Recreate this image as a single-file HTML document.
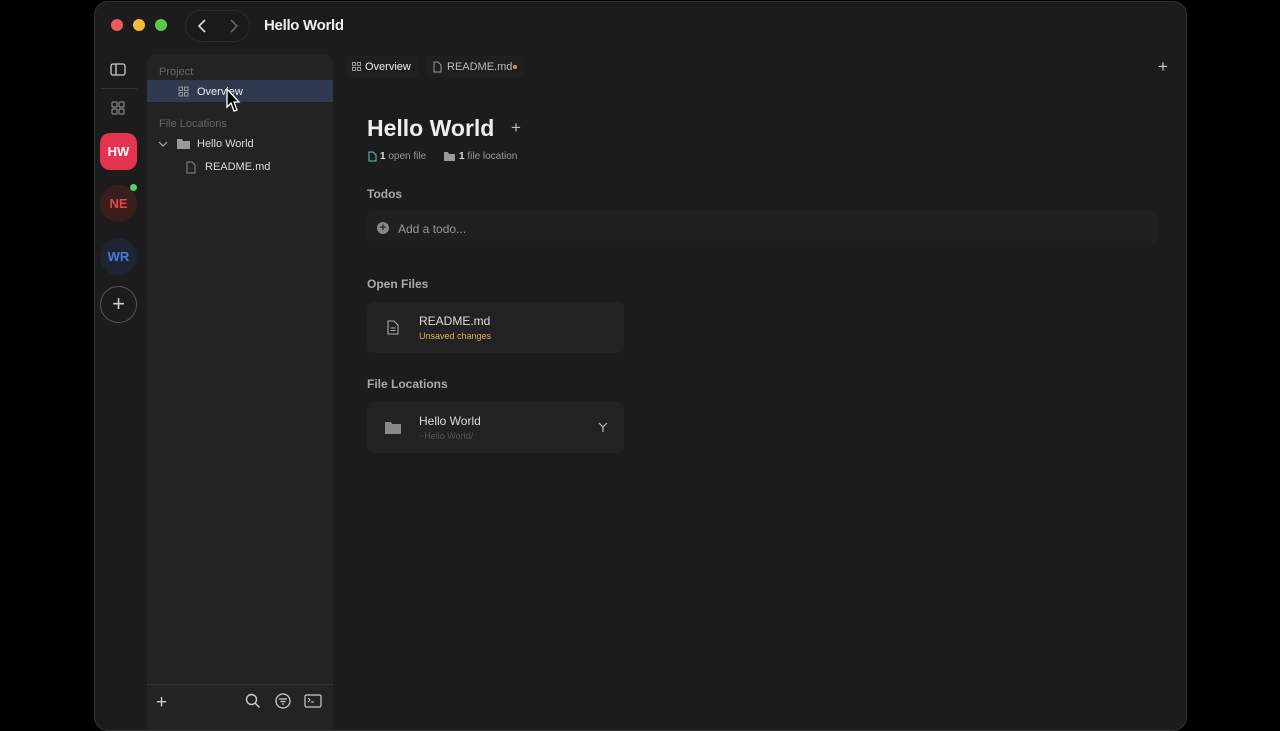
<!DOCTYPE html>
<html><head><style>
*{margin:0;padding:0;box-sizing:border-box}
body{width:1280px;height:720px;background:#000;font-family:"Liberation Sans",sans-serif;overflow:hidden;position:relative}
.win{position:absolute;left:94px;top:1px;width:1093px;height:730px;background:#1c1c1c;border-radius:14px;border:1px solid #333;overflow:hidden}
.a{position:absolute}
.side{left:52px;top:52px;width:186px;height:690px;background:#232323;border-radius:8px 8px 0 0}
.t{color:#ddd;font-size:11px;position:absolute;white-space:nowrap}
.card{position:absolute;background:#222;border-radius:6px}
.av{position:absolute;left:5px;width:37px;height:37px;border-radius:50%;font-weight:bold;font-size:13px;text-align:center;line-height:37px}
</style></head><body>
<div class="win">
 <div class="a" style="left:16px;top:17px;width:12px;height:12px;border-radius:50%;background:#ee5a57"></div>
 <div class="a" style="left:38px;top:17px;width:12px;height:12px;border-radius:50%;background:#f3bd3b"></div>
 <div class="a" style="left:60px;top:17px;width:12px;height:12px;border-radius:50%;background:#5fc64f"></div>
 <div class="a" style="left:90px;top:8px;width:65px;height:32px;border-radius:16px;background:#1a1a1a;border:1px solid #2a2a2a"></div>
 <svg class="a" style="left:100px;top:16px" width="14" height="16"><path d="M10 2 L4 8 L10 14" stroke="#ddd" stroke-width="1.6" fill="none"/></svg>
 <svg class="a" style="left:132px;top:16px" width="14" height="16"><path d="M4 2 L10 8 L4 14" stroke="#666" stroke-width="1.6" fill="none"/></svg>
 <div class="t" style="left:169px;top:15px;font-size:15px;color:#eee;font-weight:bold;letter-spacing:-0.3px">Hello World</div>

 <svg class="a" style="left:15px;top:61px" width="16" height="14"><rect x="1" y="1" width="14" height="11" rx="2" stroke="#ccc" fill="none" stroke-width="1.3"/><line x1="6" y1="1" x2="6" y2="12" stroke="#ccc" stroke-width="1.3"/></svg>
 <div class="a" style="left:6px;top:86px;width:36px;height:1px;background:#333"></div>
 <svg class="a" style="left:16px;top:99px" width="14" height="14"><g stroke="#888" fill="none" stroke-width="1.2"><rect x="1" y="1" width="5" height="5" rx="1"/><rect x="8" y="1" width="5" height="5" rx="1"/><rect x="1" y="8" width="5" height="5" rx="1"/><rect x="8" y="8" width="5" height="5" rx="1"/></g></svg>
 <div class="av" style="top:131px;border-radius:10px;background:#e3334f;color:#fff">HW</div>
 <div class="av" style="top:183px;background:#3a1e1e;color:#e34646">NE</div>
 <div class="a" style="left:35px;top:182px;width:7px;height:7px;border-radius:50%;background:#55d35a"></div>
 <div class="av" style="top:236px;background:#1d2535;color:#4a78e0">WR</div>
 <div class="av" style="top:284px;border:1px solid #555;color:#ccc;font-weight:normal;font-size:22px;line-height:33px">+</div>

 <div class="a side"></div>
 <div class="t" style="left:64px;top:64px;color:#666">Project</div>
 <div class="a" style="left:52px;top:78px;width:186px;height:22px;background:#2f3a50"></div>
 <svg class="a" style="left:83px;top:84px" width="11" height="11"><g stroke="#999" fill="none"><rect x="1" y="1" width="3.5" height="3.5"/><rect x="6.5" y="1" width="3.5" height="3.5"/><rect x="1" y="6.5" width="3.5" height="3.5"/><rect x="6.5" y="6.5" width="3.5" height="3.5"/></g></svg>
 <div class="t" style="left:102px;top:84px;color:#eee">Overview</div>
 <svg class="a" style="left:131px;top:86px" width="16" height="26"><path d="M1 1 L1 19 L5 15 L8 23 L11 22 L8 14 L13 14 Z" fill="#000" stroke="#fff" stroke-width="1.3"/></svg>
 <div class="t" style="left:64px;top:116px;color:#666">File Locations</div>
 <svg class="a" style="left:63px;top:138px" width="10" height="8"><path d="M1 2 L5 6 L9 2" stroke="#aaa" fill="none" stroke-width="1.2"/></svg>
 <svg class="a" style="left:82px;top:136px" width="13" height="11"><path d="M0 1 H5 L6 3 H13 V11 H0 Z" fill="#999"/></svg>
 <div class="t" style="left:102px;top:136px">Hello World</div>
 <svg class="a" style="left:91px;top:159px" width="10" height="13"><path d="M1 1 H6 L9 4 V12 H1 Z" stroke="#888" fill="none"/></svg>
 <div class="t" style="left:110px;top:159px">README.md</div>
 <div class="a" style="left:52px;top:682px;width:186px;height:1px;background:#333"></div>
 <div class="t" style="left:61px;top:690px;font-size:19px;color:#ccc">+</div>
 <svg class="a" style="left:150px;top:691px" width="16" height="16"><circle cx="6.5" cy="6.5" r="5" stroke="#ccc" fill="none" stroke-width="1.4"/><line x1="10" y1="10" x2="14.5" y2="14.5" stroke="#ccc" stroke-width="1.5"/></svg>
 <svg class="a" style="left:180px;top:691px" width="16" height="16"><circle cx="8" cy="8" r="7" stroke="#ccc" fill="none" stroke-width="1.3"/><path d="M4 6 H12 M5.5 8.5 H10.5 M7 11 H9" stroke="#ccc" stroke-width="1.2"/></svg>
 <svg class="a" style="left:209px;top:692px" width="18" height="14"><rect x="1" y="1" width="16" height="12" rx="1.5" stroke="#ccc" fill="none" stroke-width="1.2"/><path d="M4 4 L6 6 L4 8 M7 8 H10" stroke="#ccc" stroke-width="1"/></svg>

 <div class="a" style="left:252px;top:54px;width:72px;height:22px;background:#1f1f1f;border-radius:4px"></div>
 <svg class="a" style="left:257px;top:60px" width="9" height="9"><g stroke="#999" fill="none"><rect x=".5" y=".5" width="3" height="3"/><rect x="5.5" y=".5" width="3" height="3"/><rect x=".5" y="5.5" width="3" height="3"/><rect x="5.5" y="5.5" width="3" height="3"/></g></svg>
 <div class="t" style="left:270px;top:59px;color:#eee">Overview</div>
 <div class="a" style="left:331px;top:54px;width:98px;height:22px;background:#1f1f1f;border-radius:4px"></div>
 <svg class="a" style="left:338px;top:59px" width="9" height="12"><path d="M1 1 H5 L8 4 V11 H1 Z" stroke="#999" fill="none"/></svg>
 <div class="t" style="left:352px;top:59px;color:#bbb">README.md</div>
 <div class="a" style="left:418px;top:63px;width:4px;height:4px;border-radius:50%;background:#e88a3a"></div>
 <div class="t" style="left:1063px;top:55px;font-size:17px;color:#ccc">+</div>

 <div class="t" style="left:272px;top:113px;font-size:23px;font-weight:bold;color:#eee">Hello World</div>
 <div class="t" style="left:416px;top:116px;font-size:17px;color:#bbb">+</div>
 <svg class="a" style="left:273px;top:149px" width="9" height="11"><path d="M1 1 H5 L8 4 V10 H1 Z" stroke="#5cb" fill="none"/></svg>
 <div class="t" style="left:285px;top:149px;font-size:10px;color:#999"><b style="color:#ddd">1</b> open file</div>
 <svg class="a" style="left:349px;top:150px" width="11" height="9"><path d="M0 0 H4 L5 2 H11 V9 H0 Z" fill="#999"/></svg>
 <div class="t" style="left:364px;top:149px;font-size:10px;color:#999"><b style="color:#ddd">1</b> file location</div>

 <div class="t" style="left:272px;top:185px;font-size:12px;font-weight:bold;color:#aaa">Todos</div>
 <div class="card" style="left:272px;top:208px;width:790px;height:34px;background:#1f1f1f"></div>
 <div class="a" style="left:282px;top:220px;width:12px;height:12px;border-radius:50%;background:#888;color:#222;font-size:11px;font-weight:bold;line-height:12px;text-align:center">+</div>
 <div class="t" style="left:303px;top:220px;font-size:12px;color:#999">Add a todo...</div>

 <div class="t" style="left:272px;top:275px;font-size:12px;font-weight:bold;color:#aaa">Open Files</div>
 <div class="card" style="left:272px;top:300px;width:257px;height:51px"></div>
 <svg class="a" style="left:292px;top:318px" width="12" height="15"><path d="M1 1 H7 L11 5 V14 H1 Z M3.5 8 H8.5 M3.5 10.5 H8.5" stroke="#aaa" fill="none" stroke-width="1.1"/></svg>
 <div class="t" style="left:324px;top:312px;font-size:12px;color:#ddd">README.md</div>
 <div class="t" style="left:324px;top:329px;font-size:9px;color:#d8b84a">Unsaved changes</div>

 <div class="t" style="left:272px;top:375px;font-size:12px;font-weight:bold;color:#aaa">File Locations</div>
 <div class="card" style="left:272px;top:400px;width:257px;height:51px"></div>
 <svg class="a" style="left:290px;top:419px" width="16" height="13"><path d="M0 1 H6 L7 3 H16 V13 H0 Z" fill="#888"/></svg>
 <div class="t" style="left:324px;top:412px;font-size:12px;color:#ddd">Hello World</div>
 <div class="t" style="left:324px;top:429px;font-size:9px;color:#555">~Hello World/</div>
 <svg class="a" style="left:503px;top:420px" width="10" height="11"><path d="M1 1 L5 5 L9 1 M5 5 V10" stroke="#bbb" fill="none" stroke-width="1.2"/></svg>
</div>
</body></html>
